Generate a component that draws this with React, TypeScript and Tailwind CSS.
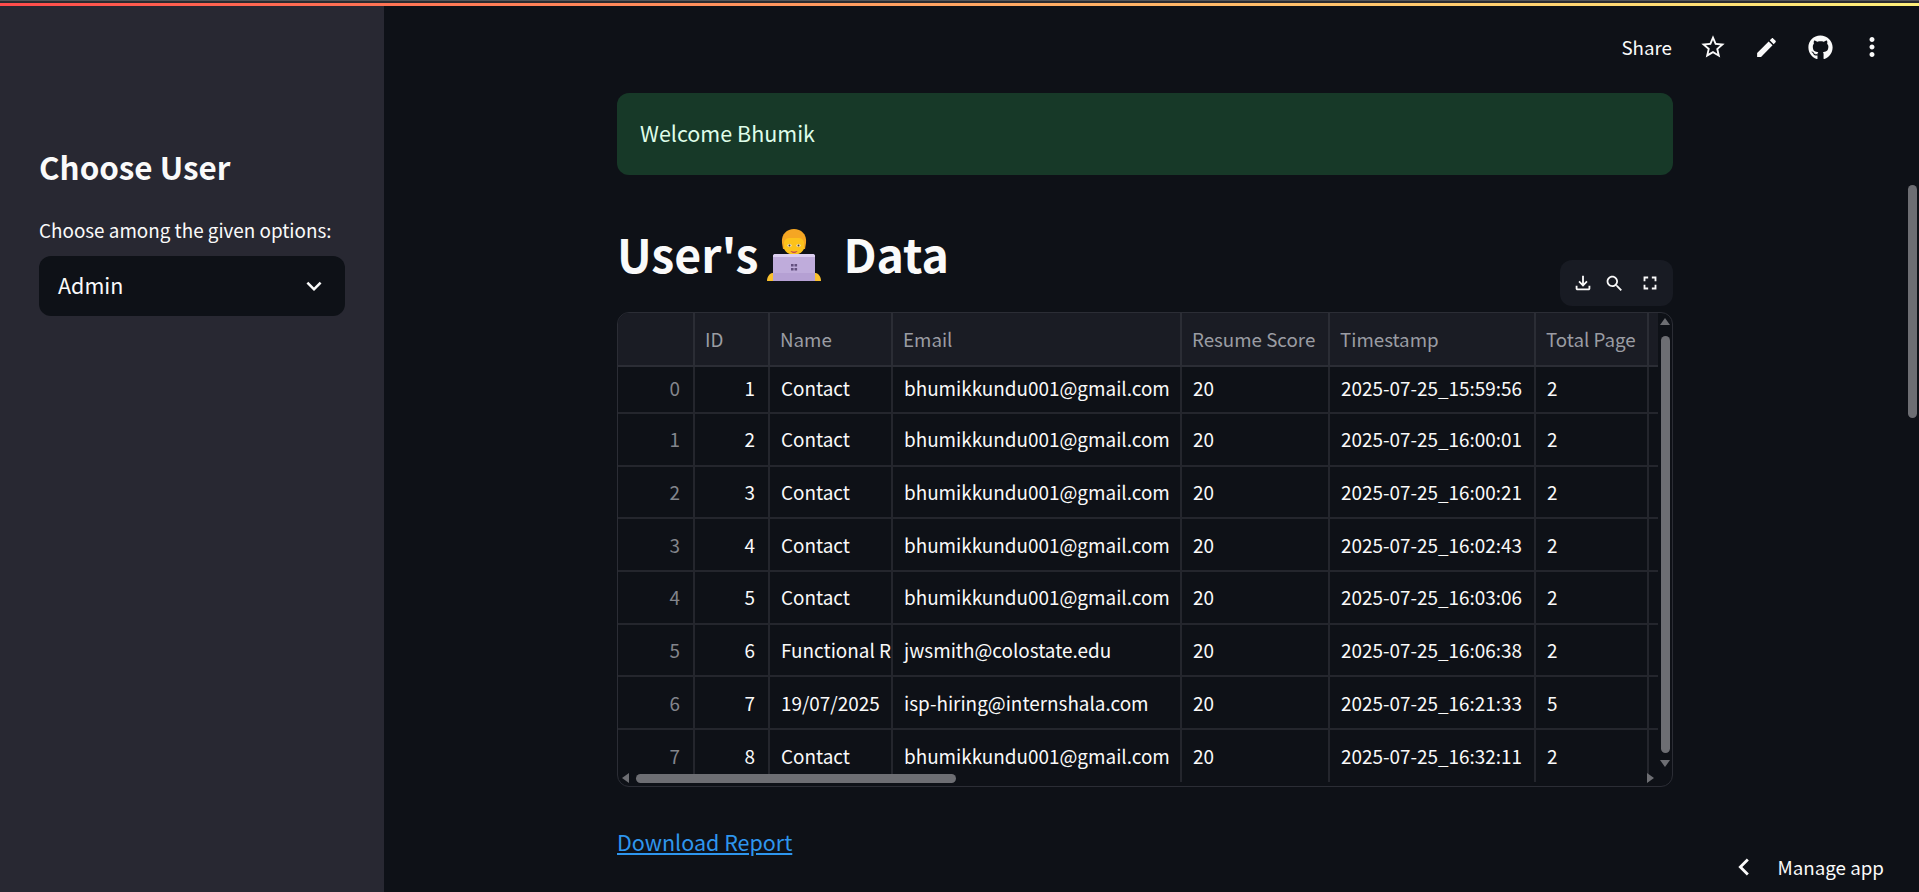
import React from "react";
import { FaGithub } from "react-icons/fa";

const cols = [
  { w: "w-[77px]", h: "" },
  { w: "w-[75px]", h: "ID" },
  { w: "w-[123px]", h: "Name" },
  { w: "w-[289px]", h: "Email" },
  { w: "w-[148px]", h: "Resume Score" },
  { w: "w-[206px]", h: "Timestamp" },
  { w: "w-[113px]", h: "Total Page" },
];

const rows = [
  ["0", "1", "Contact", "bhumikkundu001@gmail.com", "20", "2025-07-25_15:59:56", "2"],
  ["1", "2", "Contact", "bhumikkundu001@gmail.com", "20", "2025-07-25_16:00:01", "2"],
  ["2", "3", "Contact", "bhumikkundu001@gmail.com", "20", "2025-07-25_16:00:21", "2"],
  ["3", "4", "Contact", "bhumikkundu001@gmail.com", "20", "2025-07-25_16:02:43", "2"],
  ["4", "5", "Contact", "bhumikkundu001@gmail.com", "20", "2025-07-25_16:03:06", "2"],
  ["5", "6", "Functional R", "jwsmith@colostate.edu", "20", "2025-07-25_16:06:38", "2"],
  ["6", "7", "19/07/2025", "isp-hiring@internshala.com", "20", "2025-07-25_16:21:33", "5"],
  ["7", "8", "Contact", "bhumikkundu001@gmail.com", "20", "2025-07-25_16:32:11", "2"],
];

function Mi({ d, size }: { d: string; size: number }) {
  return (
    <svg width={size} height={size} viewBox="0 0 24 24" fill="#fafafa" className="shrink-0">
      <path d={d} />
    </svg>
  );
}

function Emoji() {
  return (
    <svg width="70" height="70" viewBox="0 0 70 70" className="ml-[1px] shrink-0 translate-y-[3px]">
      <path d="M8 60c0-4 2-7 5-8h44c3 1 5 4 5 8z" fill="#f9c02e" />
      <path d="M23 22c-1-9 5-14 12-14s13 5 12 14l-1 6H24z" fill="#f5a623" />
      <path d="M25 21c1-3 3-4 5-4h10c2 0 4 1 5 4v6c0 3-5 7-10 7s-10-4-10-7z" fill="#fcc21b" />
      <ellipse cx="30.5" cy="24.5" rx="2.2" ry="1.2" fill="#f4ede0" />
      <ellipse cx="39.5" cy="24.5" rx="2.2" ry="1.2" fill="#f4ede0" />
      <circle cx="30.5" cy="24.5" r="1" fill="#4a3a32" />
      <circle cx="39.5" cy="24.5" r="1" fill="#4a3a32" />
      <path d="M31.5 30c2 1 5 1 7 0-1 2.4-6 2.4-7 0z" fill="#b5245e" />
      <path d="M14 35c0-1 .8-2 2-2h38c1.200 0 2 1 2 2v25H14z" fill="#bfacdb" />
      <path d="M14 35c0-1 .8-2 2-2h38c1.200 0 2 1 2 2v1H14z" fill="#dccff0" />
      <path d="M14 52h42v8H14z" fill="#ad98cc" opacity="0.55" />
      <path d="M32 43h2.600v2.600H32zM35.500 43h2.600v2.600h-2.600zM32 47h2.600v2.600H32zM35.500 47h2.600v2.600h-2.600z" fill="#63507f" />
    </svg>
  );
}

export default function App() {
  return (
    <div
      className="h-[892px] w-[1919px] overflow-hidden bg-[#0e1117] text-[#fafafa] relative flex flex-col"
      style={{ fontFamily: '"Noto Sans CJK SC", "Noto Sans", sans-serif' }}
    >
      <div className="h-[1px] shrink-0 bg-[#555659]" />
      <div className="h-[2px] shrink-0 bg-[#2a2b30]" />
      <div className="h-[3px] shrink-0 bg-gradient-to-r from-[#ff4b4b] to-[#fff07a]" />
      <div className="flex flex-1 min-h-0">
        <aside className="w-[384px] shrink-0 bg-[#282832] pl-[39px] pr-[39px] pt-[137px]">
          <h2 className="text-[31.4px] leading-[48px] font-bold mb-[26px] whitespace-nowrap">Choose User</h2>
          <label className="block text-[18.85px] leading-[26px] mb-[13px] whitespace-nowrap">Choose among the given options:</label>
          <div className="h-[60px] rounded-[12px] bg-[#0e1117] flex items-center justify-between pl-[19px] pr-[16px]">
            <span className="text-[21.5px] pb-[2px]">Admin</span>
            <Mi size={30} d="M16.59 8.59L12 13.17 7.41 8.59 6 10l6 6 6-6z" />
          </div>
        </aside>
        <main className="flex-1 min-w-0 relative">
          <div className="flex items-center justify-end h-[84px] pr-[32px] pb-[2px]">
            <span className="text-[18.75px] mr-[27px]">Share</span>
            <Mi size={28} d="M22 9.24l-7.19-.62L12 2 9.19 8.63 2 9.24l5.46 4.73L5.820 21 12 17.270 18.180 21l-1.630-7.030L22 9.240zM12 15.400l-3.760 2.270 1-4.280-3.320-2.880 4.380-.38L12 6.100l1.710 4.040 4.380.38-3.320 2.880 1 4.280L12 15.400z" />
            <span className="ml-[27px]">
              <Mi size={25} d="M3 17.25V21h3.75L17.81 9.94l-3.75-3.75L3 17.25zM20.71 7.04c.39-.39.39-1.020 0-1.410l-2.340-2.340c-.39-.39-1.020-.39-1.410 0l-1.830 1.830 3.750 3.750 1.830-1.830z" />
            </span>
            <FaGithub size={25} className="ml-[29px] shrink-0" />
            <span className="ml-[24px]">
              <Mi size={30} d="M12 8c1.100 0 2-.9 2-2s-.9-2-2-2-2 .9-2 2 .9 2 2 2zm0 2c-1.100 0-2 .9-2 2s.9 2 2 2 2-.9 2-2-.9-2-2-2zm0 6c-1.100 0-2 .9-2 2s.9 2 2 2 2-.9 2-2-.9-2-2-2z" />
            </span>
          </div>
          <div className="ml-[233px] w-[1056px]">
            <div className="h-[82px] mt-[3px] rounded-[12px] bg-[#173928] text-[#dffde9] flex items-center pl-[23px] pb-[2px] text-[21.5px]">
              Welcome Bhumik
            </div>
            <h1 className="flex items-center h-[56px] mt-[50px] text-[46.4px] font-bold leading-[56px]">
              User's<Emoji /><span className="ml-[14px]">Data</span>
            </h1>
            <div className="flex justify-end mt-[-21px] mb-[6px]">
              <div className="flex items-center h-[46px] w-[113px] rounded-[12px] bg-[#181b23] pl-[12px]">
                <Mi size={22} d="M18 15v3H6v-3H4v3c0 1.100.9 2 2 2h12c1.100 0 2-.9 2-2v-3h-2zm-1-4l-1.410-1.410L13 12.170V4h-2v8.170L8.410 9.590 7 11l5 5 5-5z" />
                <span className="ml-[10px]">
                  <Mi size={21} d="M15.500 14h-.79l-.28-.27C15.410 12.590 16 11.110 16 9.500 16 5.910 13.090 3 9.500 3S3 5.910 3 9.500 5.910 16 9.500 16c1.610 0 3.090-.59 4.230-1.570l.27.28v.79l5 4.990L20.490 19l-4.990-5zm-6 0C7.010 14 5 11.990 5 9.500S7.010 5 9.500 5 14 7.010 14 9.500 11.990 14 9.500 14z" />
                </span>
                <span className="ml-[14px]">
                  <Mi size={22} d="M7 14H5v5h5v-2H7v-3zm-2-4h2V7h3V5H5v5zm12 7h-3v2h5v-5h-2v3zM14 5v2h3v3h2V5h-5z" />
                </span>
              </div>
            </div>
            <div className="relative h-[475px] rounded-[12px] border border-[#2b2d35] overflow-hidden">
              <div className="flex h-[54px] w-[1040px] bg-[#1a1c24] border-b-2 border-[#2b2d35] text-[#9a9ca3] text-[18.75px]">
                {cols.map((c, i) => (
                  <div key={i} className={`${c.w} shrink-0 border-r-2 border-[#2b2d35] flex items-center pl-[10px] whitespace-nowrap`}>
                    {c.h}
                  </div>
                ))}
              </div>
              {rows.map((r, ri) => (
                <div
                  key={ri}
                  className={`flex w-[1040px] text-[18.9px] ${ri === 0 ? "h-[47px] pb-0 border-b-2 border-[#24262d]" : ri === 7 ? "h-[52px]" : "h-[52.7px] border-b-2 border-[#24262d]"}`}
                >
                  {r.map((v, i) => (
                    <div
                      key={i}
                      className={`${cols[i].w} shrink-0 border-r-2 border-[#24262d] flex items-center whitespace-nowrap ${
                        i < 2 ? "justify-end pr-[13px]" : "pl-[11px]"
                      } ${i === 0 ? "text-[#83858c]" : ""} ${ri === 0 ? "pb-[2px]" : ""}`}
                    >
                      {v}
                    </div>
                  ))}
                </div>
              ))}
              <div className="absolute left-[18px] bottom-[3px] h-[9px] w-[320px] rounded-full bg-[#6d6e73]" />
              <div className="absolute right-[2px] top-[23px] w-[9px] h-[417px] rounded-full bg-[#6d6e73]" />
              <div className="absolute right-[2px] top-[5px] w-0 h-0 border-x-[5px] border-x-transparent border-b-[7px] border-b-[#6d6e73]" />
              <div className="absolute right-[2px] bottom-[19px] w-0 h-0 border-x-[5px] border-x-transparent border-t-[7px] border-t-[#6d6e73]" />
              <div className="absolute left-[4px] bottom-[3px] w-0 h-0 border-y-[5px] border-y-transparent border-r-[7px] border-r-[#6d6e73]" />
              <div className="absolute right-[18px] bottom-[3px] w-0 h-0 border-y-[5px] border-y-transparent border-l-[7px] border-l-[#6d6e73]" />
            </div>
            <a className="block mt-[39px] text-[21.5px] leading-[32px] text-[#2e96ee] underline">Download Report</a>
          </div>
          <div className="absolute right-[35px] bottom-[8px] flex items-center gap-[17px] text-[18.75px]">
            <Mi size={34} d="M15.410 7.410L14 6l-6 6 6 6 1.410-1.410L10.830 12z" />
            <span>Manage app</span>
          </div>
          <div className="absolute right-[2px] top-[179px] h-[233px] w-[9px] rounded-full bg-[#6d6e73]" />
        </main>
      </div>
    </div>
  );
}
